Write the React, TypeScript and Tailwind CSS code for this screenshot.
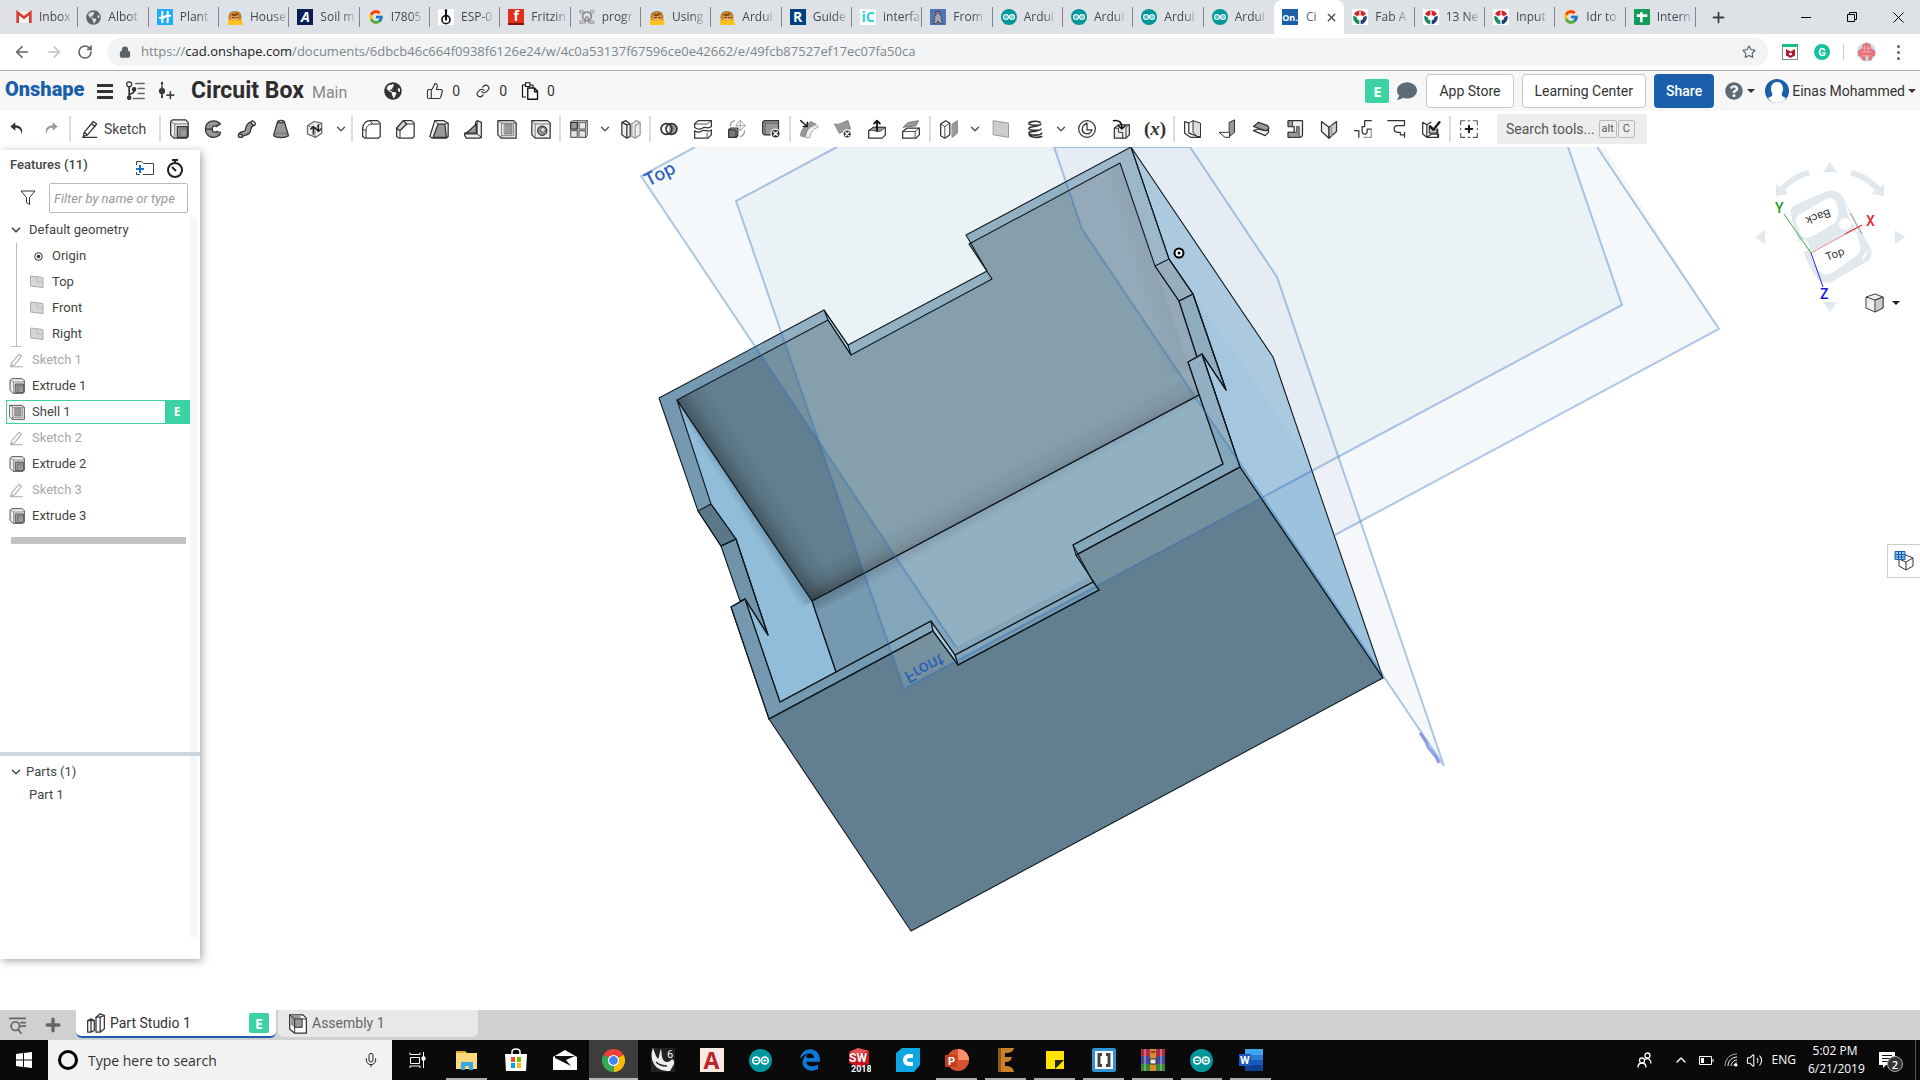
import React, { ReactNode } from "react";
import { FcGoogle } from "react-icons/fc";
import { FaEdgeLegacy, FaGlobeAmericas, FaComment, FaQuestionCircle } from "react-icons/fa";
import {
  ArrowLeft,
  ArrowRight,
  RotateCw,
  Lock,
  Star,
  Plus,
  X,
  Link,
  ThumbsUp,
  ChevronDown,
  ChevronUp,
  Mic,
  Volume2,
} from "lucide-react";

/* ---------- small helpers ---------- */

function Svg({ size = 24, stroke = "#333", children }: { size?: number; stroke?: string; children: ReactNode }) {
  return (
    <svg
      width={size}
      height={size}
      viewBox="0 0 24 24"
      fill="none"
      stroke={stroke}
      strokeWidth="1.5"
      strokeLinejoin="round"
      strokeLinecap="round"
      className="shrink-0"
      aria-hidden="true"
    >
      {children}
    </svg>
  );
}

function Caret() {
  return <span className="h-0 w-0 border-x-4 border-t-4 border-x-transparent border-t-[#333]" />;
}

/* ---------- favicons ---------- */

function Letter({ className, children }: { className: string; children: ReactNode }) {
  return (
    <span className={`flex h-4 w-4 shrink-0 items-center justify-center overflow-hidden leading-none font-bold ${className}`}>
      {children}
    </span>
  );
}

function Arduino({ size = 16 }: { size?: number }) {
  return (
    <Svg size={size}>
      <circle cx="12" cy="12" r="12" fill="#00979c" stroke="none" />
      <circle cx="7.5" cy="12" r="3.6" stroke="#fff" strokeWidth="1.8" />
      <circle cx="16.5" cy="12" r="3.6" stroke="#fff" strokeWidth="1.8" />
      <path d="M6 12h3M15 12h3M16.5 10.5v3" stroke="#fff" strokeWidth="1" />
    </Svg>
  );
}

function Gmail() {
  return (
    <Svg size={16}>
      <path d="M1 4h22v17H1z" fill="#f2f2f2" stroke="none" />
      <path d="M2.5 21V5.5L12 13l9.5-7.500V21" stroke="#d63c30" strokeWidth="4" strokeLinejoin="miter" strokeLinecap="butt" />
    </Svg>
  );
}

function HackHouse() {
  return (
    <Svg size={16}>
      <path d="M0 0h24v24H0z" fill="#1badf8" stroke="none" />
      <path d="M8 4v16M16 4v16M4 13h4c4 0 4-3 8-3h4" stroke="#fff" strokeWidth="3" />
    </Svg>
  );
}

function Instructables() {
  return (
    <Svg size={16}>
      <path d="M0 0h24v24H0z" fill="#cfe9f6" stroke="none" />
      <path d="M2 15h20l2 9H1z" fill="#fcc21b" stroke="none" />
      <path d="M2 13c0-6 3-10 10-10s10 4 10 10l-2 4H4z" fill="#c98330" stroke="none" />
      <path d="M6 11h12v6H6z" fill="#eeb060" stroke="none" />
      <path d="M8 8l3 2 5-3M8 13h3M14 13h3" stroke="#6b4418" strokeWidth="2" />
    </Svg>
  );
}

function Fab() {
  return (
    <Svg size={16}>
      <path d="M0 0h24v24H0z" fill="#fff" stroke="none" />
      <path d="M3 8a10 10 0 0118 0l-5 3a5 5 0 00-8 0z" fill="#d2232a" stroke="none" />
      <path d="M2 10l5 2c0 3 2 5 4 5v6C5 22 1 17 2 10z" fill="#1b8a5a" stroke="none" />
      <path d="M22 10l-5 2c0 3-2 5-4 5v6c6-1 10-6 9-13z" fill="#23407a" stroke="none" />
      <path d="M12 4v4" stroke="#fff" strokeWidth="2" />
    </Svg>
  );
}

function Gear() {
  return (
    <Svg size={16}>
      <path d="M2 2h4v4H2zM18 2h4v4h-4zM2 18h4v4H2zM18 18h4v4h-4z" stroke="#999" />
      <circle cx="12" cy="11" r="6.500" stroke="#888" strokeWidth="2.500" strokeDasharray="4 2" />
      <path d="M9 21c0-5 0-9 3-9s3 4 3 9" stroke="#888" strokeWidth="2" />
    </Svg>
  );
}

function Esp() {
  return (
    <Svg size={16}>
      <path d="M0 0h24v24H0z" fill="#fff" stroke="none" />
      <circle cx="12" cy="16" r="6" stroke="#111" strokeWidth="2.500" />
      <path d="M12 4v12" stroke="#111" strokeWidth="3" />
      <circle cx="12" cy="2.500" r="2" fill="#111" stroke="none" />
    </Svg>
  );
}

function Rocket() {
  return (
    <Svg size={16}>
      <path d="M0 0h24v24H0z" fill="#4f75b5" stroke="none" />
      <path d="M9 4h6v5l2 2v5l2 6h-4l-3-4-3 4H5l2-6v-5l2-2z" fill="#9fa6b5" stroke="#4a4556" />
      <circle cx="12" cy="6" r="1.500" fill="#c33" stroke="none" />
    </Svg>
  );
}

const tabs: { icon: ReactNode; title: string; active?: boolean }[] = [
  { icon: <Gmail />, title: "Inbox" },
  { icon: <FaGlobeAmericas size={15} color="#5f6368" className="shrink-0" />, title: "Albot" },
  { icon: <HackHouse />, title: "Plant" },
  { icon: <Instructables />, title: "House" },
  { icon: <Letter className="bg-[#0b1d51] text-[14px] text-white italic">A</Letter>, title: "Soil m" },
  { icon: <FcGoogle size={16} className="shrink-0" />, title: "I7805" },
  { icon: <Esp />, title: "ESP-0" },
  { icon: <Letter className="border-b-2 border-[#7c1509] bg-[#e22f1b] text-[14px] text-white">f</Letter>, title: "Fritzin" },
  { icon: <Gear />, title: "progr" },
  { icon: <Instructables />, title: "Using" },
  { icon: <Instructables />, title: "Ardui" },
  { icon: <Letter className="bg-[#00407f] text-[14px] text-white">R</Letter>, title: "Guide" },
  { icon: <Letter className="bg-white text-[14px] text-[#2bd0dc]">iC</Letter>, title: "interfa" },
  { icon: <Rocket />, title: "From" },
  { icon: <Arduino />, title: "Ardui" },
  { icon: <Arduino />, title: "Ardui" },
  { icon: <Arduino />, title: "Ardui" },
  { icon: <Arduino />, title: "Ardui" },
  { icon: <Letter className="bg-[#1b5faa] text-[9px] text-white">On.</Letter>, title: "Ci", active: true },
  { icon: <Fab />, title: "Fab A" },
  { icon: <Fab />, title: "13 Ne" },
  { icon: <Fab />, title: "Input" },
  { icon: <FcGoogle size={16} className="shrink-0" />, title: "Idr to" },
  {
    icon: (
      <Svg size={16}>
        <rect width="24" height="24" rx="2" fill="#0f9d58" stroke="none" />
        <path d="M4 10h16M11 5v15" stroke="#fff" strokeWidth="4" strokeLinecap="butt" />
      </Svg>
    ),
    title: "Intern",
  },
];

function BrowserTabs() {
  return (
    <div className="flex h-[34px] shrink-0 bg-[#dee1e6] font-['Open_Sans',sans-serif] text-[12px]">
      <div className="grid min-w-0 flex-1 auto-cols-fr grid-flow-col pl-2" role="tablist">
        {tabs.map((t, i) =>
          t.active ? (
            <div key={i} role="tab" aria-selected="true" className="flex items-center gap-2 rounded-t-lg bg-white pl-2 text-[#5f6368]">
              {t.icon}
              <span>{t.title}</span>
              <button aria-label="Close tab">
                <X size={13} strokeWidth={2.500} color="#45494d" />
              </button>
            </div>
          ) : (
            <div key={i} role="tab" aria-selected="false" className="relative flex min-w-0 items-center gap-[7px] pl-2 text-[#45494d]">
              {t.icon}
              <span className="whitespace-nowrap [mask-image:linear-gradient(to_right,black_65%,rgba(0,0,0,0.25))]">{t.title}</span>
              {!tabs[i + 1]?.active && <span className="absolute top-[7px] right-0 h-5 w-px bg-[#80868b]" />}
            </div>
          ),
        )}
      </div>
      <div className="flex w-[224px] items-center pr-2">
        <button aria-label="New tab" className="flex w-11 justify-center">
          <Plus size={17} strokeWidth={2.500} color="#3c4043" />
        </button>
        <div className="mr-2 ml-auto flex items-center gap-9 text-black">
          <button aria-label="Minimize" className="h-px w-[10px] bg-black" />
          <button aria-label="Restore">
            <svg width="10" height="10" fill="none" stroke="#000">
              <path d="M.5 2.500h7v7h-7zM2.500 2V.5h7v7H8" />
            </svg>
          </button>
          <button aria-label="Close">
            <svg width="11" height="11" fill="none" stroke="#000">
              <path d="M.5.5l10 10M10.500.5l-10 10" />
            </svg>
          </button>
        </div>
      </div>
    </div>
  );
}

function AddressBar() {
  return (
    <div className="flex h-[37px] shrink-0 items-center border-b border-[#adadad] bg-white pr-[18px] pl-[13px] text-[#5f6368]">
      <button aria-label="Back" className="mr-[14px]">
        <ArrowLeft size={18} strokeWidth={2.200} />
      </button>
      <button aria-label="Forward" className="mr-[14px]">
        <ArrowRight size={18} strokeWidth={2} color="#bfc1c4" />
      </button>
      <button aria-label="Reload" className="mr-[14px]">
        <RotateCw size={16} strokeWidth={2.400} />
      </button>
      <div className="flex h-7 flex-1 items-center rounded-full bg-[#f1f3f4] pr-3 pl-3">
        <Lock size={12} fill="#5f6368" strokeWidth={2.500} />
        <span className="ml-[10px] flex-1 font-['Open_Sans',sans-serif] text-[13px] text-[#80868b]">
          https://<span className="text-[#202124]">cad.onshape.com</span>
          /documents/6dbcb46c664f0938f6126e24/w/4c0a53137f67596ce0e42662/e/49fcb87527ef17ec07fa50ca
        </span>
        <button aria-label="Bookmark">
          <Star size={14} strokeWidth={2} />
        </button>
      </div>
      <span className="ml-[14px] flex h-4 w-4 items-center justify-center border border-t-[3px] border-[#888] border-t-[#10c27a]">
        <svg width="9" height="9" viewBox="0 0 9 9" aria-hidden="true">
          <path d="M0 0l4.500 2.500L9 0v6.500L4.500 9 0 6.500zM3 3.500v2l1.500 1 1.500-1v-2l-1.500 1z" fill="#b01c2e" fillRule="evenodd" />
        </svg>
      </span>
      <span className="ml-4 flex h-4 w-4 items-center justify-center rounded-full bg-[#15c39a] text-[11px] leading-none font-bold text-white">
        G
      </span>
      <span className="mx-[13px] h-4 w-px bg-[#c9cbcf]" />
      <svg width="19" height="20" viewBox="0 0 20 20" aria-hidden="true">
        <circle cx="10" cy="10" r="10" fill="#bfe0ee" />
        <path d="M6 2l4-2 4 2 1 4 4 3v5l-3 1-1 4h-3v-5H9v5H6l-2-4-3-1V9l4-3z" fill="#ea7079" />
        <path d="M5 6h10M4 10h12M5 14h10M8 3v8M12 3v8" stroke="#f3a6ab" />
      </svg>
      <button aria-label="Menu" className="ml-[21px] flex flex-col gap-[3px] pr-[2px]">
        <span className="h-[3px] w-[3px] rounded-full bg-[#5f6368]" />
        <span className="h-[3px] w-[3px] rounded-full bg-[#5f6368]" />
        <span className="h-[3px] w-[3px] rounded-full bg-[#5f6368]" />
      </button>
    </div>
  );
}

/* ---------- document header ---------- */

function EBadge({ className }: { className: string }) {
  return (
    <span className={`flex shrink-0 items-center justify-center bg-[#3bd3a4] font-['Open_Sans',sans-serif] font-bold text-white ${className}`}>
      E
    </span>
  );
}

function DocHeader() {
  return (
    <header className="flex h-10 shrink-0 items-center bg-[#f7f7f7] pr-1 pl-[5px] text-[14px] text-[#333]">
      <a href="#home" className="w-[80px] pb-1 text-[20px] leading-6 font-black text-[#1b5faa]">
        Onshape
      </a>
      <button aria-label="Main menu" className="ml-3 flex w-4 flex-col gap-[3px]">
        <span className="h-[3px] bg-[#333]" />
        <span className="h-[3px] bg-[#333]" />
        <span className="h-[3px] bg-[#333]" />
      </button>
      <button aria-label="Versions and history" className="ml-3">
        <Svg size={20}>
          <circle cx="5" cy="4" r="3" />
          <path d="M5 7v15M5 18c0-4 6-2 6-6" strokeWidth="2" />
          <circle cx="11" cy="10" r="2" fill="#333" />
          <circle cx="5" cy="20" r="2" fill="#333" />
          <path d="M13 3h10M16 9h7M16 15h7M10 21h13" stroke="#5c6b78" strokeWidth="2" />
        </Svg>
      </button>
      <button aria-label="Create version" className="ml-3">
        <Svg size={20}>
          <path d="M6 2v4M6 18v4" strokeDasharray="1.500 3" strokeWidth="2.500" />
          <circle cx="6" cy="12" r="3" fill="#333" />
          <path d="M6 6v12M12 17h8M16 13v8" stroke="#444" strokeWidth="2" />
        </Svg>
      </button>
      <h1 className="ml-[14px] text-[23px] leading-7 font-bold text-[#2d2d2d]">Circuit Box</h1>
      <span className="ml-2 pt-1 text-[16px] text-[#888]">Main</span>
      <FaGlobeAmericas className="ml-[37px]" size={18} color="#333" />
      <ThumbsUp className="ml-6" size={18} strokeWidth={1.500} />
      <span className="ml-2">0</span>
      <Link className="ml-4" size={14} strokeWidth={2} />
      <span className="ml-[9px]">0</span>
      <span className="ml-[14px]">
        <Svg size={18}>
          <path d="M6 20H2V4h4M12 4h4v3" stroke="#111" />
          <path d="M6 1h6v5H6z" stroke="#111" fill="#fff" />
          <path d="M9 8h9l4 4v11H9zM18 8v5h4" stroke="#111" strokeWidth="1.800" fill="#fff" />
        </Svg>
      </span>
      <span className="ml-2">0</span>

      <div className="ml-auto flex items-center">
        <EBadge className="h-6 w-6 rounded-xs text-[15px]" />
        <FaComment className="ml-2" size={20} color="#5c6b78" />
        <button className="ml-[9px] h-[34px] rounded-sm border border-[#c8c8c8] bg-white px-3">App Store</button>
        <button className="ml-2 h-[34px] rounded-sm border border-[#c8c8c8] bg-white px-3">Learning Center</button>
        <button className="ml-2 h-[34px] rounded-sm bg-[#1b5faa] px-3 font-medium text-white">Share</button>
        <button aria-label="Help" className="ml-[11px] flex items-center gap-1">
          <FaQuestionCircle size={18} color="#5c6b78" />
          <Caret />
        </button>
        <button className="ml-[10px] flex items-center gap-[3px]">
          <svg width="24" height="24" viewBox="0 0 24 24" aria-hidden="true">
            <circle cx="12" cy="12" r="12" fill="#1b5faa" />
            <path d="M12 3c-4 0-6 3-6 7 0 3 2 4 1 7l-4 2c2 3 5 5 9 5s7-2 9-5l-4-2c-1-3 1-4 1-7 0-4-2-7-6-7z" fill="#fff" />
          </svg>
          Einas Mohammed
          <Caret />
        </button>
      </div>
    </header>
  );
}

/* ---------- CAD toolbar ---------- */

const G = "#999";
const L = "#d4d4d4";

const icons: Record<string, ReactNode> = {
  undo: (
    <path d="M10 4L4 9l6 5v-3.500c5 0 7 3 7.500 8C20 12 16 7.500 10 7.500z" fill="#333" stroke="none" />
  ),
  redo: (
    <path d="M14 4l6 5-6 5v-3.500c-5 0-7 3-7.500 8C4 12 8 7.500 14 7.500z" fill={G} stroke="none" />
  ),
  sketch: (
    <>
      <path d="M5 16L16 3l4 3L9 19l-5 2zM14 6l4 3M5 16l4 3" />
      <path d="M3 22h17" />
    </>
  ),
  extrude: (
    <>
      <path d="M2 3l2-2h16l3 3v17l-2 2H6l-4-4z" fill="#eee" />
      <path d="M2 3l5 3v17M7 6h14l2-2" stroke="#777" strokeWidth="1.200" />
      <path d="M10 9h12v13H10z" fill={G} />
      <path d="M13 22V12h9" stroke="#666" strokeWidth="1" />
    </>
  ),
  revolve: (
    <>
      <path d="M20 5C14 0 3 2 3 12s11 13 17 7l-4-4c-3 2-5 0-5-3s2-5 5-3z" fill={G} />
      <path d="M16 9l5-3-1-1M3 12l8 0M16 15l5 1-1 3" fill={L} />
    </>
  ),
  sweep: (
    <>
      <path d="M2 18c3-5 7-1 8-5s1-8 8-10l3 4c-5 2-4 4-5 8-2 6-8 3-10 7z" fill={G} />
      <ellipse cx="19.500" cy="5" rx="2" ry="3" fill={L} transform="rotate(-35 19.500 5)" />
      <ellipse cx="4" cy="20" rx="2.500" ry="2" fill={L} />
    </>
  ),
  loft: (
    <>
      <path d="M8 3h8l5 17c-4 3-14 3-18 0z" fill={G} />
      <path d="M8 3c2-2 6-2 8 0-2 2-6 2-8 0z" fill={L} />
      <path d="M3 20l5-3h8l5 3" stroke="#666" strokeWidth="1" />
    </>
  ),
  thicken: (
    <>
      <path d="M3 8l8-5 9 2v12l-7 5-10-4z" fill="#eee" stroke="#666" />
      <path d="M3 8l9 3 8-6M12 11v11" stroke="#666" strokeWidth="1" />
      <path d="M10 10v8M7 12l3-3 3 3M16 7v7M14 12l2 3 3-3" stroke="#222" strokeWidth="1.800" />
    </>
  ),
  fillet: (
    <>
      <path d="M2 21V11c0-5 4-9 9-9h9l3 3v16l-2 2H5z" fill="#fff" />
      <path d="M6 22V14c0-5 3-8 8-8h8M2 12l4 2M11 2l3 4" strokeWidth="1.200" />
    </>
  ),
  chamfer: (
    <>
      <path d="M2 21V11l8-9h10l3 3v16l-2 2H5z" fill="#fff" />
      <path d="M2 11l8-9 4 4-8 8z" fill={L} />
      <path d="M6 22v-8l8-8h8" strokeWidth="1.200" />
    </>
  ),
  draft: (
    <>
      <path d="M7 2h11l5 3v16l-2 2H4l-3-2z" fill="#eee" />
      <path d="M11 6h8l2 16H5z" fill={G} />
      <path d="M7 2l4 4M19 6l4-1" strokeWidth="1" />
    </>
  ),
  rib: (
    <>
      <path d="M17 2l5 2v18l-2 1H4l-2-3v-3l13-4V4z" fill="#eee" />
      <path d="M16 6v11H4z" fill={G} />
      <path d="M2 18h15l5 4M17 3v15" strokeWidth="1.200" />
    </>
  ),
  shell: (
    <>
      <path d="M1 2h19l3 3v18H5l-4-4z" fill="#eee" />
      <path d="M6 5h14v15H6zM1 2l5 3M23 5h-3M6 20l-1 3" stroke="#666" strokeWidth="1" />
      <path d="M9 6h9v12H9z" fill={G} stroke="#777" strokeWidth="1" />
    </>
  ),
  hole: (
    <>
      <path d="M1 2h19l3 3v18H5l-4-4z" fill="#eee" />
      <path d="M1 2l4 4h18M5 6v17" stroke="#666" strokeWidth="1" />
      <circle cx="13.500" cy="14" r="5.500" fill={G} />
      <circle cx="14.500" cy="13" r="3" fill={L} stroke="#555" strokeWidth="1" />
    </>
  ),
  pattern: (
    <>
      <path d="M2 4h8v8H2z" fill={G} />
      <path d="M12 4h8v8h-8zM2 14h8v8H2zM12 14h8v8h-8z" fill="#e4e4e4" stroke="#666" />
      <path d="M2 4l2-2h18v18l-2 2M10 4l1-2M20 4l2-2" strokeWidth="1" />
    </>
  ),
  mirror: (
    <>
      <path d="M1 4l5-2 5 4v15l-4 2-6-4zM1 4l6 3v16M7 7l4-1" fill="#eee" />
      <path d="M13 6l5-4 5 2v15l-6 4-4-2zM17 8v15M17 8l6-4" stroke={G} fill="#eee" />
    </>
  ),
  boolean: (
    <>
      <path d="M15 5.500a6.500 6.500 0 010 13c-2-1-3-3-3-6.500s1-5.500 3-6.500z" fill={G} stroke="none" />
      <circle cx="9" cy="12" r="6.500" strokeWidth="2" />
      <circle cx="15" cy="12" r="6.500" strokeWidth="2" />
    </>
  ),
  split: (
    <>
      <path d="M2 6l4-4h16v7c-4 4-7-1-11 2-3 2-7 1-9-1z" fill="#fff" />
      <path d="M2 14c4 3 6 2 9 0 4-2 7 3 11-1v6l-4 4H2z" fill="#fff" />
      <path d="M2 6h15l5-4M17 17v5" strokeWidth="1" />
    </>
  ),
  transform: (
    <>
      <path d="M2 13h9v9H2z" fill="#777" />
      <path d="M2 13l2-2h9v9l-2 2" />
      <path d="M16 2l6 6-6 6-5-6zM11 8h11M16 2v12" stroke={G} strokeWidth="1" />
      <path d="M4 8c0-4 2-5 5-6M21 14c0 4-2 6-5 7" stroke={G} />
    </>
  ),
  deletePart: (
    <>
      <path d="M2 4l2-2h17v17H4l-2-2z" fill={G} />
      <path d="M5 19V5h16M2 3l3 2" stroke="#555" strokeWidth="1" />
      <circle cx="17.500" cy="17.500" r="5.500" fill="#333" stroke="#fff" />
      <path d="M15.500 15.500l4 4M19.500 15.500l-4 4" stroke="#fff" strokeWidth="1.800" />
    </>
  ),
  modifyFillet: (
    <>
      <path d="M8 22c0-8 4-12 13-15l2 3c-6 2-9 5-10 12z" fill="#eee" stroke={G} strokeWidth="1" />
      <path d="M2 20C2 12 8 8 14 3l6 3C12 9 9 12 7 21z" fill={G} stroke="#777" strokeWidth="1" />
      <path d="M2 2l8 7M10 4v5H5" stroke="#222" strokeWidth="1.800" />
    </>
  ),
  deleteFace: (
    <>
      <path d="M2 6c6 2 10-3 16-4l3 10c-5 0-8 4-13 5z" fill={G} stroke="#777" strokeWidth="1" />
      <circle cx="17" cy="18" r="5" fill="#333" stroke="#fff" />
      <path d="M15 16l4 4M19 16l-4 4" stroke="#fff" strokeWidth="1.800" />
    </>
  ),
  moveFace: (
    <>
      <path d="M2 14l6-4h14v9l-4 4H2z" fill="#fff" />
      <path d="M2 14c6-2 9 3 15 0l5-4H8z" fill={G} strokeWidth="1" />
      <path d="M12 14V2M8.500 5.500L12 2l3.500 3.500" stroke="#111" strokeWidth="2.200" />
    </>
  ),
  replaceFace: (
    <>
      <path d="M2 15l5-4h15v8l-4 4H2z" fill="#fff" />
      <path d="M2 15h15l5-4M17 15v7" strokeWidth="1" />
      <path d="M3 10c5-8 9-6 18-8l-3 6c-6 2-10 0-15 2z" fill={G} stroke="#666" strokeWidth="1" />
    </>
  ),
  offset: (
    <>
      <path d="M2 6l6-4 5 3v14l-6 4-5-3z" fill="#fff" />
      <path d="M2 6l5 3v13M7 9l6-4" strokeWidth="1" />
      <path d="M16 6l6-4v15l-6 5z" fill={G} stroke="#777" strokeWidth="1" />
    </>
  ),
  plane: <path d="M3 2l18 3v17L3 19z" fill="#ccc" stroke="#888" strokeWidth="1" />,
  helix: (
    <path
      d="M18 4C12 1 3 4 5 6s14 2 14 0M19 6c-2 4-16 2-14 6 1 2 14 2 14 0M19 12c-2 4-16 2-14 5 1 3 14 3 15 0M5 19c1 3 10 4 15 2"
      strokeWidth="2"
    />
  ),
  curve: (
    <>
      <circle cx="12" cy="12" r="10" />
      <path d="M12 5v8h6c-1 4-5 6-9 4S5 8 12 5z" strokeWidth="1.500" />
    </>
  ),
  derived: (
    <>
      <path d="M4 11l5-4h13v12l-4 4H4z" fill="#eee" />
      <path d="M4 11h5v5h5v7M18 22V10l4-3" strokeWidth="1.200" />
      <path d="M3 2c7-1 10 2 10 9M9 8l4 4 4-4" stroke="#111" strokeWidth="1.800" />
    </>
  ),
  sheetModel: (
    <>
      <path d="M2 3l5 2v12l14 5H9l-7-5z" fill="#fff" />
      <path d="M7 5l5-3 9 3v16l-4 0-5-5V2" fill="#ddd" strokeWidth="1.200" />
    </>
  ),
  flange: (
    <>
      <path d="M15 4l6-3v15l-6 5z" fill={G} strokeWidth="1.200" />
      <path d="M3 16h12v6H10z" fill="#fff" strokeWidth="1.200" />
    </>
  ),
  hem: (
    <>
      <path d="M3 9l6-5 11 4c3 3 1 6-3 6z" fill={G} />
      <path d="M3 14l5-2 9 2c3 0 4-2 4-3v5l-4 4z" fill="#eee" />
    </>
  ),
  tab: (
    <>
      <path d="M4 2h17v16c0 3-1 4-4 4H4v-6h7V9H4z" fill="#eee" />
      <path d="M4 2h5v7H4zM4 16h10V9h3v13H4z" fill={G} strokeWidth="1" />
    </>
  ),
  joint: (
    <>
      <path d="M3 3l9 7v13l-9-8z" fill="#eee" />
      <path d="M21 3l-9 7v13l9-8z" fill={L} />
      <path d="M15 8v12" stroke={G} strokeWidth="2" />
    </>
  ),
  relief: (
    <>
      <path d="M2 14h5v8M22 2h-8v7h-3v6c0 4 6 4 6 0v-3h5" />
      <path d="M22 12v10h-9" stroke={G} />
    </>
  ),
  corner: <path d="M1 2h20M21 2v5M21 8h-8c-6 0-6 8 0 8h3v3h5M21 16v6" />,
  finish: (
    <>
      <path d="M2 4l5 3v15l-5-4zM7 7l5-3M7 22l6-4h8v4H8M20 12v9" fill="#fff" />
      <path d="M10 8v9h9v-5" fill={L} />
      <path d="M11 9l4 4 7-9" stroke="#222" strokeWidth="3" />
    </>
  ),
  add: (
    <>
      <path d="M2 7V2h5M17 2h5v5M22 17v5h-5M7 22H2v-5M2 11v2M22 11v2M11 2h2M11 22h2" stroke="#555" strokeWidth="1.300" />
      <path d="M12 8v8M8 12h8" stroke="#222" strokeWidth="2.500" />
    </>
  ),
};

const toolGroups: string[][] = [
  ["extrude", "revolve", "sweep", "loft", "thicken", "v"],
  ["fillet", "chamfer", "draft", "rib", "shell", "hole"],
  ["pattern", "v", "mirror"],
  ["boolean", "split", "transform", "deletePart"],
  ["modifyFillet", "deleteFace", "moveFace", "replaceFace"],
  ["offset", "v", "plane", "helix", "v", "curve", "derived", "variable"],
  ["sheetModel", "flange", "hem", "tab", "joint", "relief", "corner", "finish"],
  ["add"],
];

function Sep() {
  return <span className="mx-px h-[26px] w-[2px] shrink-0 bg-[#ddd]" />;
}

function Tool({ name }: { name: string }) {
  if (name === "v")
    return (
      <button aria-label="More" className="flex w-[18px] shrink-0 justify-center">
        <ChevronDown size={14} color="#555" strokeWidth={2.500} />
      </button>
    );
  return (
    <button aria-label={name} className="flex w-[34px] shrink-0 justify-center">
      {name === "variable" ? (
        <span className="font-['Liberation_Serif',serif] text-[19px] leading-5 font-bold text-[#333]">
          (<i>x</i>)
        </span>
      ) : (
        <Svg size={20}>{icons[name]}</Svg>
      )}
    </button>
  );
}

function Toolbar() {
  return (
    <div className="flex h-9 shrink-0 items-center bg-white text-[14px] text-[#444]">
      <Tool name="undo" />
      <Tool name="redo" />
      <Sep />
      <button className="flex w-[86px] items-center gap-1 pl-2">
        <Svg size={20}>{icons.sketch}</Svg>
        Sketch
      </button>
      <Sep />
      {toolGroups.map((g, i) => (
        <React.Fragment key={i}>
          {i > 0 && <Sep />}
          {g.map((n, j) => (
            <Tool key={j} name={n} />
          ))}
        </React.Fragment>
      ))}
      <button className="ml-[11px] flex h-[30px] w-[150px] items-center rounded-xs bg-[#ededed] pl-[9px] text-[#555]">
        Search tools...
        <kbd className="ml-1 rounded-xs border border-[#bbb] px-[2px] font-['Roboto',sans-serif] text-[11px] leading-4">alt</kbd>
        <kbd className="ml-px rounded-xs border border-[#bbb] px-1 font-['Roboto',sans-serif] text-[11px] leading-4">C</kbd>
      </button>
    </div>
  );
}

/* ---------- feature panel ---------- */

function PlaneIcon() {
  return (
    <svg width="14" height="14" viewBox="0 0 14 14" aria-hidden="true">
      <path d="M.5 1l12.500 1.500v10L.5 11z" fill="#d6d6d6" stroke="#aaa" />
      <path d="M7 2v5h6" fill="none" stroke="#bbb" />
    </svg>
  );
}

function FeatureIcon({ kind }: { kind: string }) {
  if (kind === "sketch")
    return (
      <svg width="15" height="15" viewBox="0 0 24 24" fill="none" stroke="#aaa" strokeWidth="1.800" aria-hidden="true">
        <path d="M4 16L16 2l4 3L9 19l-6 2zM2 22h20" />
      </svg>
    );
  return (
    <Svg size={16} stroke="#555">
      {icons[kind]}
    </Svg>
  );
}

const features = [
  { kind: "sketch", name: "Sketch 1" },
  { kind: "extrude", name: "Extrude 1" },
  { kind: "shell", name: "Shell 1" },
  { kind: "sketch", name: "Sketch 2" },
  { kind: "extrude", name: "Extrude 2" },
  { kind: "sketch", name: "Sketch 3" },
  { kind: "extrude", name: "Extrude 3" },
];

function FeaturePanel() {
  return (
    <aside className="absolute top-[3px] left-0 flex h-[809px] w-[200px] flex-col bg-white text-[13px] text-[#444] shadow-[2px_2px_8px_rgba(0,0,0,0.35)]">
      <div className="flex h-[30px] items-center pr-4 pl-[10px]">
        <h2 className="flex-1 font-medium">Features (11)</h2>
        <button aria-label="Add folder" className="mt-[6px] mr-3">
          <svg width="19" height="16" viewBox="0 0 19 16" fill="none" stroke="#444" aria-hidden="true">
            <path d="M1.500 5V1.500h5l2 2h10v11H8M1.500 12v2.500H5" />
            <path d="M5 5v8M1 9h8" stroke="#1b74c5" strokeWidth="2" />
          </svg>
        </button>
        <button aria-label="Rebuild time" className="mt-[6px]">
          <svg width="18" height="19" viewBox="0 0 18 19" fill="none" stroke="#222" strokeWidth="2" aria-hidden="true">
            <circle cx="9" cy="11" r="7" />
            <path d="M9 4V1M6 1h6M6 8l4 4" />
          </svg>
        </button>
      </div>
      <div className="mb-px flex h-9 items-center pr-3 pl-5">
        <svg width="16" height="16" viewBox="0 0 16 16" fill="none" stroke="#333" className="mr-[13px]" aria-hidden="true">
          <path d="M1 1h14L9.500 7.500v7l-3-2v-5z" />
        </svg>
        <input
          type="text"
          aria-label="Filter features"
          placeholder="Filter by name or type"
          className="h-[30px] min-w-0 flex-1 rounded-xs border border-[#bbb] px-1 text-[13px] placeholder:text-[#999] placeholder:italic"
        />
      </div>
      <div className="flex min-h-0 flex-1 flex-col border-b-4 border-[#cbd8e1]">
        <div className="mr-[3px] flex-1 border-r-[7px] border-[#f2f7fb]">
          <div className="flex h-[26px] items-center gap-[6px] pl-[9px]">
            <ChevronDown size={14} strokeWidth={3} />
            Default geometry
          </div>
          <ul className="relative ml-4 border-l border-[#bbb]">
            <li className="flex h-[26px] items-center pl-[17px]">
              <svg width="9" height="9" viewBox="0 0 9 9" className="mr-[9px]" aria-hidden="true">
                <circle cx="4.500" cy="4.500" r="3.800" fill="none" stroke="#333" />
                <circle cx="4.500" cy="4.500" r="1.800" fill="#333" />
              </svg>
              Origin
            </li>
            {["Top", "Front", "Right"].map((p) => (
              <li key={p} className="flex h-[26px] items-center gap-[8px] pl-[13px]">
                <PlaneIcon />
                {p}
              </li>
            ))}
            <li className="absolute bottom-0 -left-[6px] h-px w-[10px] bg-[#bbb]" />
          </ul>
          <ul>
            {features.map((f) => (
              <li
                key={f.name}
                className={
                  f.name === "Shell 1"
                    ? "my-px ml-[6px] flex h-6 items-center border border-[#3bd3a4] pl-[2px]"
                    : f.kind === "sketch"
                      ? "flex h-[26px] items-center pl-[9px] text-[#a8a8a8]"
                      : "flex h-[26px] items-center pl-[9px]"
                }
              >
                <span className="mr-[7px] flex w-4">
                  <FeatureIcon kind={f.kind} />
                </span>
                {f.name}
                {f.name === "Shell 1" && <EBadge className="ml-auto h-6 w-6 text-[12px]" />}
              </li>
            ))}
          </ul>
          <div className="mt-2 mr-1 ml-[11px] h-[7px] bg-[#c2c2c2]" />
        </div>
      </div>
      <div className="mr-[3px] mb-[22px] h-[181px] border-r-[7px] border-[#f2f7fb] pt-1">
        <div className="flex h-[23px] items-center gap-[3px] pl-[9px]">
          <ChevronDown size={14} strokeWidth={2.500} />
          Parts (1)
        </div>
        <div className="flex h-[23px] items-center pl-[29px]">Part 1</div>
      </div>
    </aside>
  );
}

/* ---------- 3D view ---------- */

const TOP_PLANE =
  "M641 176L956 647L1088 577L1076 553L1073 545L1223 464L1188 362L1197 357L1179 301L1193 294L1313 467L1335 535L1719 329L1500 -20L1000 -20Z";
const FRONT_PLANE = "M736 201L904 689L1622 305L1568 147L1530 30L1050 30Z";
const RIGHT_PLANE = "M1054 147L1082 229L1444 766L1277 277L1190 147Z";

const outerFaces: [string, string][] = [
  ["M1131 147L1273 357L1383 678L1240 467L1202 354L1226 390L1193 294L1169 259Z", "#90bddb"],
  [
    "M659 398L824 310L848 345L987 271L966 235L1131 147L1169 259L1193 294L1226 390L1202 354L1240 467L1076 555L1099 590L958 665L933 631L769 719L731 607L745 599L768 635L736 539L721 546L698 511Z",
    "#7499b0",
  ],
];
const backWall =
  "M677 400L828 320L851 355L992 279L969 244L1120 163L1155 266L1179 301L1197 357L1188 362L1199 395L812 601Z";

const innerFaces: [string, string][] = [
  ["M812 601L1199 395L1223 464L1073 545L1093 582L955 655L931 621L836 672Z", "#7499b0"],
  ["M677 400L812 601L836 672L780 702L745 599L768 635L736 539L711 504Z", "#91bddb"],
];

const frontFaces: [string, string][] = [
  ["M769 719L933 631L958 665L1099 590L1076 555L1240 467L1383 678L911 931Z", "#617f90"],
  ["M780 702L931 621L933 631L769 719L731 607L745 599Z", "#7499b0"],
  ["M955 655L1093 582L1099 590L958 665Z", "#7499b0"],
  ["M1073 545L1223 464L1188 362L1202 354L1240 467L1076 555Z", "#7499b0"],
  ["M931 621L955 655L958 665L933 631Z", "#9cc4de"],
  ["M824 310L848 345L851 355L828 320Z", "#9cc4de"],
  ["M698 511L711 504L736 539L721 546Z", "#5b7888"],
  ["M721 546L736 539L768 635L745 599L740 601Z", "#7094aa"],
  ["M1155 266L1169 259L1193 294L1179 301Z", "#68889b"],
  ["M1179 301L1193 294L1226 390L1202 354L1197 357Z", "#7094aa"],
];

function Model() {
  const faces = (list: [string, string][]) => list.map(([d, fill]) => <path key={d} d={d} fill={fill} />);
  return (
    <svg
      viewBox="0 147 1920 863"
      preserveAspectRatio="xMidYMin slice"
      className="h-full w-full"
      role="img"
      aria-label="Circuit box model"
    >
      <defs>
        <linearGradient id="aoFloor" gradientUnits="userSpaceOnUse" x1="1005" y1="498" x2="993" y2="475">
          <stop offset="0" stopColor="#1a1a1a" stopOpacity="0.35" />
          <stop offset="0.4" stopColor="#1a1a1a" stopOpacity="0.12" />
          <stop offset="1" stopColor="#1a1a1a" stopOpacity="0" />
        </linearGradient>
        <linearGradient id="aoUnder" gradientUnits="userSpaceOnUse" x1="1005" y1="498" x2="1010" y2="507">
          <stop offset="0" stopColor="#111" stopOpacity="0.18" />
          <stop offset="1" stopColor="#111" stopOpacity="0" />
        </linearGradient>
        <linearGradient id="aoLeft" gradientUnits="userSpaceOnUse" x1="745" y1="501" x2="772" y2="483">
          <stop offset="0" stopColor="#111" stopOpacity="0.36" />
          <stop offset="0.5" stopColor="#111" stopOpacity="0.1" />
          <stop offset="1" stopColor="#111" stopOpacity="0" />
        </linearGradient>
        <linearGradient id="aoWall" gradientUnits="userSpaceOnUse" x1="745" y1="501" x2="737" y2="506">
          <stop offset="0" stopColor="#123" stopOpacity="0.2" />
          <stop offset="1" stopColor="#123" stopOpacity="0" />
        </linearGradient>
        <linearGradient id="aoRight" gradientUnits="userSpaceOnUse" x1="1138" y1="214" x2="1118" y2="220">
          <stop offset="0" stopColor="#111" stopOpacity="0.1" />
          <stop offset="1" stopColor="#111" stopOpacity="0" />
        </linearGradient>
        <clipPath id="back">
          <path d={backWall} />
        </clipPath>
        <clipPath id="leftWall">
          <path d={innerFaces[1][0]} />
        </clipPath>
      </defs>

      {faces(outerFaces)}
      <path d={backWall} fill="#617f90" />
      <g clipPath="url(#back)">
        <path d="M812 601L1199 395L1170 340L783 546Z" fill="url(#aoFloor)" />
        <path d="M677 400L812 601L870 562L735 361Z" fill="url(#aoLeft)" />
        <path d="M1120 163L1190 370L1160 380L1090 173Z" fill="url(#aoRight)" />
      </g>
      {faces(innerFaces)}
      <path d="M812 601L1199 395L1205 406L816 612Z" fill="url(#aoUnder)" />
      <g clipPath="url(#leftWall)">
        <path d="M677 400L812 601L798 611L663 410Z" fill="url(#aoWall)" />
      </g>
      {faces(frontFaces)}

      {/* reference planes */}
      <g fill="rgb(199,218,229)" fillOpacity="0.196">
        <path d={TOP_PLANE} />
        <path d={FRONT_PLANE} />
        <path d={RIGHT_PLANE} fill="rgb(208,216,236)" />
      </g>

      {/* model edges */}
      <g fill="none" stroke="#121a20" strokeWidth="1.100" strokeLinejoin="round">
        {[...outerFaces, ...innerFaces, ...frontFaces].map(([d]) => (
          <path key={d} d={d} />
        ))}
        <path d={backWall} />
      </g>

      <g fill="none" stroke="rgb(40,105,185)" strokeOpacity="0.36" strokeWidth="2">
        <path d="M956 647L641 176L695 147M1335 535L1719 329L1597 147" />
        <path d="M837 147L736 201L904 689L1622 305L1568 147" />
        <path d={RIGHT_PLANE} />
      </g>
      <path d="M1420 733l6 9 2 5 8 10 3 6" stroke="#4a62d8" strokeOpacity="0.6" strokeWidth="3" fill="none" />

      <g fontFamily="Inter, sans-serif" fontWeight="500" fill="#2b62b8">
        <text transform="translate(648 187) rotate(-27)" fontSize="18">
          Top
        </text>
        <text transform="translate(903 673) rotate(-28) scale(1 -1)" fontSize="17">
          Front
        </text>
      </g>
      <circle cx="1179" cy="253" r="4.500" fill="#fff" stroke="#000" strokeWidth="2" />
      <circle cx="1179" cy="253" r="1.500" fill="#000" />
    </svg>
  );
}

function ViewCube() {
  return (
    <svg width="160" height="180" viewBox="1750 150 160 180" className="absolute top-[3px] right-[10px]" role="img" aria-label="View cube">
      <g fill="#e1e8ee">
        <path d="M1830 162l7 10h-14zM1830 312l7-10h-14zM1755 237l10-7v14zM1905 237l-10-7v14z" />
        <path d="M1776 196v-12l4 3c8-9 17-14 28-17l2 5c-10 3-18 8-25 15l3 4zM1884 196v-12l-4 3c-8-9-17-14-28-17l-2 5c10 3 18 8 25 15l-3 4z" />
        <path d="M1791 215c-2-6 2-9 8-12l26-11c7-3 14-1 18 5l27 50c3 6 2 12-4 15l-31 18c-7 4-14 4-19-3-7-10-20-38-25-62z" />
      </g>
      <g fill="#fff">
        <path d="M1796 223c-1-5 2-8 6-10l22-13c6-4 11-2 13 4 2 8 2 16-4 20l-20 12c-6 3-11 2-13-3z" />
        <path d="M1811 252l36-19c6-3 10-1 11 4 2 8 5 14-2 19l-22 16c-6 4-12 3-16-2-4-6-8-12-7-18z" />
        <circle cx="1845" cy="224" r="6" />
        <circle cx="1803" cy="246" r="6" />
        <path d="M1844 200l17 38-12-20zM1868 250c-1 4-3 8-6 11l2-7z" />
      </g>
      <path d="M1850 213l12 21" stroke="#999" />
      <g fontFamily="Inter, sans-serif" fontSize="11" fill="#333">
        <text transform="translate(1829 209) rotate(161)">Back</text>
        <text transform="translate(1827 261) rotate(-20)">Top</text>
      </g>
      <g fontFamily="Roboto, sans-serif" fontSize="14" fontWeight="500">
        <path d="M1811 253l-27-39" stroke="#3aae3a" />
        <path d="M1811 253l51-28" stroke="#e8888a" />
        <path d="M1845 234l17-9" stroke="#d22" />
        <path d="M1811 253l12 34" stroke="#2222dd" />
        <text x="1775" y="213" fill="#1a9c1a">
          Y
        </text>
        <text x="1866" y="226" fill="#e03030">
          X
        </text>
        <text x="1820" y="299" fill="#1a1ae0">
          Z
        </text>
      </g>
      <g stroke="#444" strokeLinejoin="round">
        <path d="M1866 297l9-3 8 3v11l-8 4-9-4z" fill="#eee" />
        <path d="M1875 300l8-3v11l-8 4z" fill="#ccc" />
        <path d="M1866 297l9 3 8-3" fill="none" />
      </g>
      <path d="M1892 301h8l-4 4z" fill="#222" />
    </svg>
  );
}

/* ---------- bottom bars ---------- */

function StudioTabs() {
  return (
    <div className="flex h-[30px] shrink-0 bg-[#d0d0d0] text-[14px]">
      <button aria-label="Search tabs" className="flex w-[34px] items-center justify-center">
        <Svg size={17}>
          <path d="M1 2h22M17 8h6M17 13h6" stroke="#666" strokeWidth="2.500" />
          <circle cx="9" cy="13" r="6" stroke="#666" strokeWidth="2.500" />
          <path d="M13 18l4 5" stroke="#666" strokeWidth="2.500" />
        </Svg>
      </button>
      <button aria-label="Add tab" className="flex w-[42px] items-center justify-center pr-[4px]">
        <Plus size={20} strokeWidth={4} color="#666" />
      </button>
      <div className="mb-[2px] flex w-[200px] items-center rounded-b-md border-b-2 border-[#1b5faa] bg-white pr-[7px] pl-[10px] text-[#333]">
        <Svg size={20}>
          <path d="M2 9l4-2 4 2v12l-4 2H2zM2 9h4l4 0M6 10v13" fill="#fff" />
          <path d="M12 5l5-4 5 2v16l-5 4h-5zM12 5h5l5-2M17 5v18" fill="#fff" />
        </Svg>
        <span className="ml-[4px] flex-1">Part Studio 1</span>
        <EBadge className="h-5 w-5 rounded-xs text-[14px]" />
      </div>
      <div className="mb-[3px] ml-[2px] flex w-[200px] items-center rounded-b-md bg-[#e8e8e8] pl-[10px] text-[#666]">
        <Svg size={20}>
          <path d="M2 1h16l4 4v18H8l-6-5z" fill="#fff" />
          <path d="M3 2h11l3 4v10H8l-5-3z" fill={G} stroke="none" />
          <path d="M2 1l6 5h14M8 6v17M17 6v10H8" strokeWidth="1.200" />
        </Svg>
        <span className="ml-[4px]">Assembly 1</span>
      </div>
    </div>
  );
}

function AppTile({ className, children }: { className: string; children?: ReactNode }) {
  return <span className={`flex h-6 w-6 items-center justify-center leading-none font-bold ${className}`}>{children}</span>;
}

const apps: { name: string; icon: ReactNode; running?: boolean; active?: boolean }[] = [
  {
    name: "Task View",
    icon: (
      <svg width="18" height="16" fill="none" stroke="#fff" aria-hidden="true">
        <path d="M1 .5v2h10v-2M1.500 5.500h9v6h-9zM1 16v-2h10v2M14.500 0v16" />
        <path d="M13 5h3v3h-3z" fill="#fff" />
      </svg>
    ),
  },
  {
    name: "File Explorer",
    running: true,
    icon: (
      <svg width="24" height="20" viewBox="0 0 24 20" aria-hidden="true">
        <path d="M1 1h9l2 2h10v16H1z" fill="#fbd97a" />
        <path d="M1 1h9v2H1z" fill="#e0a82e" />
        <path d="M6 12h12v8h-4v-4h-4v4H6z" fill="#35a8e0" />
      </svg>
    ),
  },
  {
    name: "Store",
    icon: (
      <svg width="24" height="24" viewBox="0 0 24 24" aria-hidden="true">
        <path d="M8 7V4c0-4 8-4 8 0v3" fill="none" stroke="#fff" strokeWidth="1.500" />
        <path d="M1 6h22l-1 17H2z" fill="#fff" />
        <path d="M7 9h4v5H7z" fill="#f25022" />
        <path d="M13 9h4v5h-4z" fill="#7fba00" />
        <path d="M7 15h4v5H7z" fill="#00a4ef" />
        <path d="M13 15h4v5h-4z" fill="#ffb900" />
      </svg>
    ),
  },
  {
    name: "Mail",
    icon: (
      <svg width="24" height="20" viewBox="0 0 24 20" aria-hidden="true">
        <path d="M0 7l12-7 12 7v13H0z" fill="#fff" />
        <path d="M2 6h20l-9 4 5 6L2 8z" fill="#111" />
      </svg>
    ),
  },
  {
    name: "Chrome",
    running: true,
    active: true,
    icon: (
      <svg width="23" height="23" viewBox="0 0 24 24" aria-hidden="true">
        <path d="M12 12L1.600 6A12 12 0 0122.400 6z" fill="#ea4335" />
        <path d="M12 12L22.400 6A12 12 0 0112 24z" fill="#fbbc05" />
        <path d="M12 12v12A12 12 0 011.600 6z" fill="#34a853" />
        <circle cx="12" cy="12" r="5.800" fill="#fff" />
        <circle cx="12" cy="12" r="4.600" fill="#4285f4" />
      </svg>
    ),
  },
  {
    name: "Rhino 6",
    icon: (
      <svg width="24" height="24" viewBox="0 0 24 24" aria-hidden="true">
        <path d="M0 0h24v24H0z" fill="#222" />
        <path d="M2 0l3 8 2 3c2-3 1-7 3-10 1 4 0 8 3 12 3 2 6 1 8-2l2 2v3l-4 7c-7 0-12-1-16-7C0 11 0 5 2 0z" fill="#eee" />
        <path d="M5 14c3 3 6 4 11 4" stroke="#222" strokeWidth="1.500" fill="none" />
        <text x="16" y="10" fontSize="11" fill="#fff" fontFamily="Roboto, sans-serif">
          6
        </text>
      </svg>
    ),
  },
  { name: "AutoCAD", icon: <AppTile className="bg-[#fbe9e3] text-[23px] text-[#b9252c]">A</AppTile> },
  { name: "Arduino", icon: <Arduino size={23} /> },
  { name: "Edge", icon: <FaEdgeLegacy size={22} color="#0f78d7" /> },
  {
    name: "SolidWorks 2018",
    icon: (
      <svg width="24" height="24" viewBox="0 0 24 24" aria-hidden="true">
        <path d="M2 4l9-4 11 3v13l-10 3L2 15z" fill="#c8141f" />
        <path d="M2 4l9-4 11 3-9 3z" fill="#e8525a" />
        <g fill="#fff" fontFamily="Roboto, sans-serif" fontWeight="bold">
          <text x="2" y="14" fontSize="12">
            SW
          </text>
          <text x="4" y="24" fontSize="9">
            2018
          </text>
        </g>
      </svg>
    ),
  },
  {
    name: "Cura",
    icon: (
      <svg width="24" height="24" viewBox="0 0 24 24" aria-hidden="true">
        <path d="M6 0h18v17l-6 7H0V5z" fill="#0ea5e3" />
        <path d="M17 6h-4c-8 0-8 12 0 12h4v-4h-3c-4 0-4-4 0-4h3z" fill="#fff" />
      </svg>
    ),
  },
  {
    name: "PowerPoint",
    running: true,
    icon: (
      <svg width="24" height="24" viewBox="0 0 24 24" aria-hidden="true">
        <circle cx="13" cy="12" r="11" fill="#d35230" />
        <path d="M13 1a11 11 0 0111 11H13z" fill="#ff8f6b" />
        <path d="M0 7h12v12H0z" fill="#c43e1c" />
        <text x="3" y="17" fontSize="11" fontWeight="bold" fill="#fff" fontFamily="Roboto, sans-serif">
          P
        </text>
      </svg>
    ),
  },
  {
    name: "Eagle",
    running: true,
    icon: (
      <svg width="16" height="24" viewBox="0 0 16 24" aria-hidden="true">
        <path d="M0 0h16c-1 4-4 5-9 5v4h7c-1 4-3 5-7 5v4c5 0 8 1 9 6H0z" fill="#c9822b" />
        <path d="M0 0h3v24H0z" fill="#8d5a1c" />
      </svg>
    ),
  },
  {
    name: "Sticky Notes",
    running: true,
    icon: (
      <svg width="18" height="18" aria-hidden="true">
        <path d="M0 0h18v18H0z" fill="#ffe600" />
        <path d="M9 9h9l-9 9z" fill="#222" />
      </svg>
    ),
  },
  {
    name: "Brackets",
    running: true,
    icon: (
      <svg width="24" height="24" viewBox="0 0 24 24" aria-hidden="true">
        <rect width="24" height="24" rx="2" fill="#2d94d2" />
        <path d="M3 3h18v18H3z" fill="#fff" />
        <path d="M10 6.500H7v11h3M14 6.500h3v11h-3" fill="none" stroke="#444" strokeWidth="3" />
      </svg>
    ),
  },
  {
    name: "WinRAR",
    running: true,
    icon: (
      <svg width="24" height="24" viewBox="0 0 24 24" aria-hidden="true">
        <path d="M0 1h24v7H0z" fill="#b02848" />
        <path d="M0 8h24v8H0z" fill="#4048a0" />
        <path d="M0 16h24v7H0z" fill="#2f8a3a" />
        <path d="M4 1v22M20 1v22" stroke="#d9b9a0" />
        <path d="M9 1h6v22H9z" fill="#d98a2b" />
        <path d="M9 11h6v5H9z" fill="#eee" stroke="#333" />
        <path d="M10 4h4" stroke="#7a4a10" strokeWidth="2" />
      </svg>
    ),
  },
  { name: "Arduino IDE", running: true, icon: <Arduino size={23} /> },
  {
    name: "Word",
    running: true,
    icon: (
      <svg width="24" height="22" viewBox="0 0 24 22" aria-hidden="true">
        <path d="M6 0h18v6H6z" fill="#41a5ee" />
        <path d="M6 6h18v5H6z" fill="#2b7cd3" />
        <path d="M6 11h18v5H6z" fill="#185abd" />
        <path d="M6 16h18v6H6z" fill="#103f91" />
        <path d="M0 5h12v12H0z" fill="#185abd" />
        <text x="1" y="15" fontSize="11" fontWeight="bold" fill="#fff" fontFamily="Roboto, sans-serif">
          W
        </text>
      </svg>
    ),
  },
];

function Taskbar() {
  return (
    <div className="flex h-10 shrink-0 bg-[#0a0a0a] font-['Open_Sans',sans-serif] text-[12px] text-white">
      <button aria-label="Start" className="flex w-12 items-center justify-center">
        <svg width="16" height="16" viewBox="0 0 16 16" fill="#fff" aria-hidden="true">
          <path d="M0 2l7-1v6.500H0zM8 1l8-1v7.500H8zM0 8.500h7V15l-7-1zM8 8.500h8V16l-8-1z" />
        </svg>
      </button>
      <label className="mr-px flex w-[344px] items-center bg-[#f2f2f2] pr-[13px] pl-[10px]">
        <span className="h-5 w-5 shrink-0 rounded-full border-[3px] border-black" />
        <input
          type="text"
          aria-label="Type here to search"
          placeholder="Type here to search"
          className="ml-[10px] min-w-0 flex-1 text-[14px] placeholder:text-[#333]"
        />
        <Mic size={16} color="#222" strokeWidth={1.500} />
      </label>
      {apps.map((a) => (
        <button
          key={a.name}
          aria-label={a.name}
          className={
            a.active
              ? "relative flex w-[49px] items-center justify-center bg-[#3d3d3d]"
              : "relative flex w-[49px] items-center justify-center"
          }
        >
          {a.icon}
          {a.running && (
            <span className={a.active ? "absolute inset-x-0 bottom-0 h-[2px] bg-[#b9b5b3]" : "absolute inset-x-1 bottom-0 h-[2px] bg-[#b0acab]"} />
          )}
        </button>
      ))}
      <div className="ml-auto flex items-center pr-1">
        <svg width="15" height="16" viewBox="0 0 15 16" fill="none" stroke="#fff" strokeWidth="1.300" aria-hidden="true">
          <circle cx="10.500" cy="3.500" r="2.500" />
          <path d="M8 7.500c3-2 6 0 6 4" />
          <circle cx="5" cy="8.500" r="2.500" />
          <path d="M1 15.500c0-6 8-6 8 0" />
        </svg>
        <ChevronUp className="ml-[21px]" size={16} strokeWidth={2} />
        <svg width="15" height="9" fill="none" stroke="#fff" className="ml-[10px]" aria-hidden="true">
          <path d="M.5.5h12v8H.5zM14 3v3" />
          <path d="M2 2h3v5H2z" fill="#fff" stroke="none" />
        </svg>
        <svg width="14" height="14" fill="none" stroke="#fff" className="ml-[10px]" aria-hidden="true">
          <path d="M1 13C1 6 6 1 13 1" stroke="#aaa" />
          <path d="M4 13c0-5 4-9 9-9M7 13c0-3 3-6 6-6M10 13c0-2 1-3 3-3" />
          <circle cx="12" cy="12" r="1.500" fill="#fff" stroke="none" />
        </svg>
        <Volume2 className="ml-2" size={17} strokeWidth={1.500} />
        <span className="ml-[9px]">ENG</span>
        <div className="ml-3 w-[54px] text-center leading-[18px] whitespace-nowrap">
          <div>5:02 PM</div>
          <div>6/21/2019</div>
        </div>
        <button aria-label="Notifications" className="relative ml-[17px] h-6 w-6">
          <svg width="16" height="16" viewBox="0 0 16 16" aria-hidden="true">
            <path d="M0 0h16v13H7l-3 3v-3H0z" fill="#fff" />
            <path d="M3 3.500h10M3 6.500h10M3 9.500h7" stroke="#111" />
          </svg>
          <span className="absolute right-0 bottom-0 flex h-4 w-4 items-center justify-center rounded-full border border-[#aaa] bg-[#333] text-[11px] leading-none font-semibold">
            2
          </span>
        </button>
        <span className="ml-3 h-10 w-px bg-[#555]" />
      </div>
    </div>
  );
}

export default function App() {
  return (
    <div className="flex h-screen flex-col overflow-hidden bg-white font-['Roboto',sans-serif]">
      <BrowserTabs />
      <AddressBar />
      <DocHeader />
      <Toolbar />
      <main className="relative min-h-0 flex-1">
        <Model />
        <FeaturePanel />
        <ViewCube />
        <button
          aria-label="Configurations"
          className="absolute top-[397px] right-0 flex h-[34px] w-[33px] items-center justify-center border border-r-0 border-[#ccc] bg-white"
        >
          <svg width="20" height="20" viewBox="0 0 20 20" fill="none" stroke="#333" aria-hidden="true">
            <path d="M5 8l7-4 7 3v8l-7 4-7-4zM5 8l7 3 7-4M12 11v8" />
            <path d="M1 .5h10v8H1z" fill="#9cc8ee" stroke="#1b5faa" />
            <path d="M1 3.500h10M1 6h10M4.500.5v8M7.500.5v8" stroke="#1b5faa" />
          </svg>
        </button>
      </main>
      <StudioTabs />
      <Taskbar />
    </div>
  );
}
